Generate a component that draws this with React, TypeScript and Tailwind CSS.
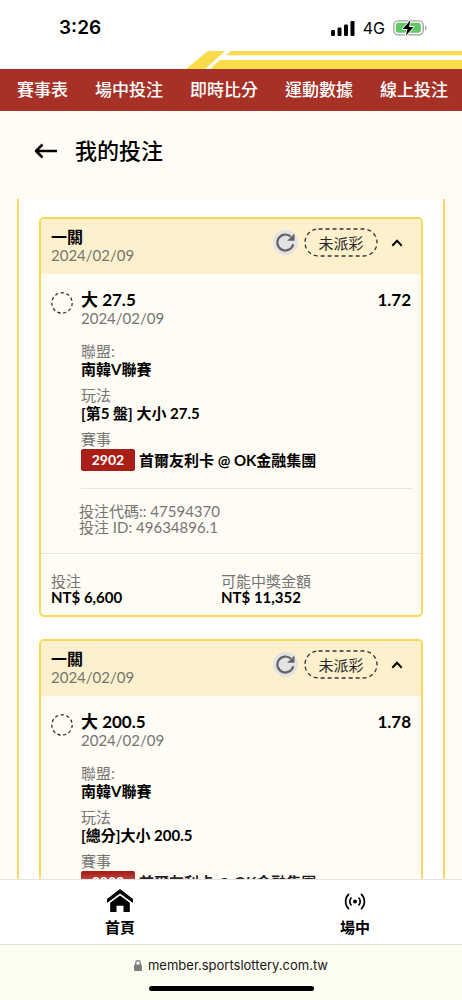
const NAV_ITEMS = ['賽事表', '場中投注', '即時比分', '運動數據', '線上投注']

const BETS = [
  {
    title: '一關', date: '2024/02/09', status: '未派彩', pick: '大 27.5', odds: '1.72', league: '南韓V聯賽',
    play: '[第5 盤] 大小 27.5', matchNo: '2902', match: '首爾友利卡 @ OK金融集團',
    code: '47594370', betId: '49634896.1', stake: 'NT$ 6,600', payout: 'NT$ 11,352',
  },
  {
    title: '一關', date: '2024/02/09', status: '未派彩', pick: '大 200.5', odds: '1.78', league: '南韓V聯賽',
    play: '[總分]大小 200.5', matchNo: '2902', match: '首爾友利卡 @ OK金融集團',
  },
]

const StatusBar = () => (
  <div className="relative flex h-[69px] shrink-0 items-start justify-between bg-white pl-[59px] pr-[35px] pt-[16px] font-['Inter',sans-serif]">
    <span className="text-[19px] font-semibold leading-6">3:26</span>
    <div className="flex h-6 items-center gap-2">
      <svg width="24" height="15" viewBox="0 0 24 15">
        <rect x="0" y="9" width="4" height="6" rx="1.2" />
        <rect x="6.5" y="6.5" width="4" height="8.5" rx="1.2" />
        <rect x="13" y="3.5" width="4" height="11.5" rx="1.2" />
        <rect x="19.5" y="0" width="4" height="15" rx="1.2" />
      </svg>
      <span className="text-base leading-6">4G</span>
      <svg width="34" height="18" viewBox="0 0 34 18">
        <rect x="0.8" y="1.8" width="29.5" height="14" rx="4.5" fill="#fff" stroke="#a3a3a3" strokeWidth="1.3" />
        <rect x="2.8" y="3.8" width="25" height="10" rx="2.8" fill="#62c766" />
        <path d="M32 6.5c2 .8 2 4 0 4.8z" fill="#a3a3a3" />
        <path d="M17.5 1 9.8 9.9h4.7L12.8 16.8l7.8-8.9h-4.6z" fill="#000" stroke="#fff" strokeWidth="1.6" strokeLinejoin="round" paintOrder="stroke" />
      </svg>
    </div>
    <svg className="absolute bottom-0 right-0" width="276" height="18" viewBox="0 0 276 18" fill="#f9dc4a">
      <path d="M0 18 22 0h17L19 18z" />
      <path d="M45 0h231v4.3H40z" />
      <path d="M34 9h242v9H24z" />
    </svg>
  </div>
)

const StatusBadge = ({ label }: { label: string }) => (
  <span className="relative flex h-[29px] w-[74px] items-center justify-center text-[15px] text-neutral-800">
    <svg className="absolute inset-0 h-full w-full" fill="none">
      <rect x="1" y="1" width="72" height="27" rx="13.5" stroke="#333" strokeWidth="1.3" strokeDasharray="4 3" />
    </svg>
    {label}
  </span>
)

const Field = ({ label, children }: any) => (
  <div>
    <p className="text-[#757573]">{label}</p>
    <div className="font-bold">{children}</div>
  </div>
)

const BetCard = ({ bet }: { bet: (typeof BETS)[number] }) => (
  <article className="overflow-hidden rounded-[5px] border-2 border-[#f9d857] bg-[#fffcf5] text-[15px] leading-[18px]">
    <header className="flex h-[55px] items-start justify-between bg-[#fcf1cc] px-[10px] pt-[9px]">
      <div>
        <h2 className="text-base leading-[18px] font-bold">{bet.title}</h2>
        <p className="text-[#757573]">{bet.date}</p>
      </div>
      <div className="flex items-center gap-[6px] pr-[2px]">
        <button aria-label="重新整理" className="flex h-[25px] w-[25px] items-center justify-center rounded-full bg-[#e3e3e5]">
          <svg width="19" height="19" viewBox="0 0 19 19" fill="none" stroke="#636365">
            <path d="M17.2 11.2A8 8 0 1 1 14.9 3.7" strokeWidth="2.2" />
            <path d="M18.5.5v7.3h-7.3z" fill="#636365" stroke="none" />
          </svg>
        </button>
        <StatusBadge label={bet.status} />
        <button aria-label="收合" className="flex h-[25px] w-[25px] items-center justify-center">
          <svg width="12" height="8" viewBox="0 0 12 8" fill="none" stroke="#000" strokeWidth="2">
            <path d="M1.3 6.7 6 1.8l4.7 4.9" />
          </svg>
        </button>
      </div>
    </header>

    <div className="flex gap-2 px-[10px] pt-[17px]">
      <svg className="mt-px shrink-0" width="22" height="22" viewBox="0 0 22 22" fill="none">
        <circle cx="11" cy="11" r="10.2" stroke="#222" strokeWidth="1.2" strokeDasharray="3.2 2.6" />
      </svg>
      <div className="min-w-0 flex-1">
        <div className="flex justify-between text-[17px] leading-[18px] font-bold">
          <h3>{bet.pick}</h3>
          <span>{bet.odds}</span>
        </div>
        <p className="text-[#757573]">{bet.date}</p>
        <div className="mt-[15px] flex flex-col gap-2">
          <Field label="聯盟:">{bet.league}</Field>
          <Field label="玩法">{bet.play}</Field>
          <Field label="賽事">
            <div className="mt-px flex items-center gap-1 leading-[22px]">
              <span className="w-[54px] rounded-[2px] bg-[#a91e17] text-center text-sm leading-[22px] text-white">{bet.matchNo}</span>
              <span>{bet.match}</span>
            </div>
          </Field>
        </div>
      </div>
    </div>

    {bet.code && (
      <>
        <div className="ml-10 mr-2 mt-[17px] border-t border-[#e6e4df]" />
        <div className="pb-[18px] pl-[38px] pt-[14px] leading-4 text-[#757573]">
          <p>投注代碼:: {bet.code}</p>
          <p>投注 ID: {bet.betId}</p>
        </div>

        <div className="grid grid-cols-[17fr_19fr] border-t border-[#e6e4df] px-[10px] pb-[10px] pt-[19px] leading-4">
          <Field label="投注">{bet.stake}</Field>
          <Field label="可能中獎金額">{bet.payout}</Field>
        </div>
      </>
    )}
  </article>
)

export default function App() {
  return (
    <div lang="zh-Hant" className="flex h-screen flex-col bg-[#fffcf5] font-['Lato','Noto_Sans_CJK_TC',sans-serif] text-black">
      <StatusBar />

      <nav className="flex h-[42px] shrink-0 items-center gap-[27px] overflow-hidden whitespace-nowrap bg-[#a73126] px-[17px] text-[17px] font-medium text-white">
        {NAV_ITEMS.map((item) => <a key={item} href="#">{item}</a>)}
      </nav>

      <div className="flex h-[88px] shrink-0 items-start gap-4 pl-[34px] pt-[24px]">
        <button aria-label="返回" className="flex h-8 items-center">
          <svg width="25" height="18" viewBox="0 0 25 18" fill="none" stroke="#000" strokeWidth="2.5">
            <path d="M23 9H2.5M8.500 2.500 2 9l6.500 6.500" strokeLinejoin="round" />
          </svg>
        </button>
        <h1 className="text-[22px] font-medium leading-8">我的投注</h1>
      </div>

      <main className="min-h-0 flex-1 overflow-y-auto [scrollbar-width:none]">
        <div className="mx-[17px] flex flex-col gap-[22px] border-x-2 border-[#f9d857] bg-white px-5 pt-[18px]">
          {BETS.map((bet) => <BetCard key={bet.pick} bet={bet} />)}
        </div>
      </main>

      <nav className="relative flex h-[66px] shrink-0 justify-between border-y border-[#dededc] bg-white pl-[105px] pr-[92px] text-[15px] font-bold leading-5">
        <div className="pointer-events-none absolute inset-x-0 bottom-full h-2 bg-linear-to-b from-white/0 to-white/20" />
        <a href="#" className="flex flex-col items-center pt-2">
          <svg width="26" height="25" viewBox="0 0 26 25">
            <path d="M13 1 0 11v4L13 5.5 26 15v-4z" />
            <path d="M13 7.5 3.2 14.7V24H9.5v-6.3h7V24h6.300v-9.300z" />
          </svg>
          <span className="mt-1">首頁</span>
        </a>
        <a href="#" className="flex flex-col items-center pt-2">
          <svg width="22" height="25" viewBox="0 0 22 25" fill="none" stroke="#000" strokeWidth="1.7">
            <circle cx="11" cy="13.5" r="2" fill="#000" stroke="none" />
            <path d="M7.5 9.5a5.5 5.5 0 0 0 0 8M14.5 9.5a5.5 5.5 0 0 1 0 8M5 6a10 10 0 0 0 0 15M17 6a10 10 0 0 1 0 15" />
          </svg>
          <span className="mt-1">場中</span>
        </a>
      </nav>

      <footer className="flex h-[55px] shrink-0 flex-col items-center bg-[#fdfcf1] pt-[10px] font-['Inter',sans-serif]">
        <p className="flex items-center gap-[6px] text-[13px] leading-5 text-neutral-900">
          <svg width="8" height="11" viewBox="0 0 8 11">
            <rect y="4.5" width="8" height="6.5" rx="1.2" fill="#7d7d7d" />
            <path d="M1.7 5V3a2.3 2.3 0 0 1 4.6 0v2" fill="none" stroke="#7d7d7d" strokeWidth="1.2" />
          </svg>
          member.sportslottery.com.tw
        </p>
        <div className="mt-[11px] h-[5px] w-[165px] rounded-full bg-black" />
      </footer>
    </div>
  )
}
